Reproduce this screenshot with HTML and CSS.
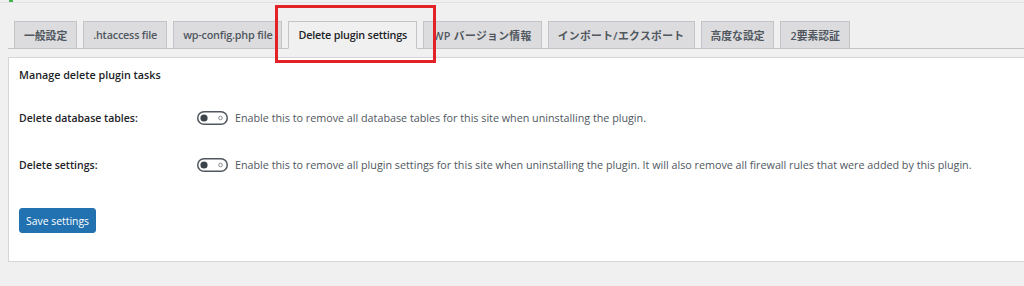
FILE: index.html
```html
<!doctype html>
<html>
  <head>
    <meta charset="UTF-8">
    <title>Delete plugin settings</title>
    <link rel="stylesheet" href="styles.css">
  </head>
  <body>
    <div class="topbar"><span class="mark"></span></div>

    <div class="wrap">
      <div class="tabs">
        <a class="tab" href="#">一般設定</a>
        <a class="tab en" href="#">.htaccess file</a>
        <a class="tab en" href="#">wp-config.php file</a>
        <a class="tab en active" href="#">Delete plugin settings</a>
        <a class="tab kana" href="#">WP バージョン情報</a>
        <a class="tab kana" href="#">インポート/エクスポート</a>
        <a class="tab" href="#">高度な設定</a>
        <a class="tab" href="#">2要素認証</a>
      </div>

      <div class="panel">
        <h3 class="panel-title">Manage delete plugin tasks</h3>

        <div class="row">
          <div class="label">Delete database tables:</div>
          <svg class="toggle" width="31" height="14" viewBox="0 0 31 14">
            <rect x="0.75" y="0.75" width="29.5" height="12.5" rx="6.25" fill="#fff" stroke="#50575e" stroke-width="1.5"/>
            <circle cx="7" cy="7" r="3.6" fill="#3c434a"/>
            <circle cx="23.5" cy="7" r="1.8" fill="none" stroke="#8c8f94" stroke-width="1"/>
          </svg>
          <div class="desc">Enable this to remove all database tables for this site when uninstalling the plugin.</div>
        </div>

        <div class="row">
          <div class="label">Delete settings:</div>
          <svg class="toggle" width="31" height="14" viewBox="0 0 31 14">
            <rect x="0.75" y="0.75" width="29.5" height="12.5" rx="6.25" fill="#fff" stroke="#50575e" stroke-width="1.5"/>
            <circle cx="7" cy="7" r="3.6" fill="#3c434a"/>
            <circle cx="23.5" cy="7" r="1.8" fill="none" stroke="#8c8f94" stroke-width="1"/>
          </svg>
          <div class="desc">Enable this to remove all plugin settings for this site when uninstalling the plugin. It will also remove all firewall rules that were added by this plugin.</div>
        </div>

        <button class="btn">Save settings</button>
      </div>
    </div>

    <!-- annotation box round the active tab -->
    <div class="highlight"></div>
  </body>
</html>
```

FILE: styles.css
```css
*{
  margin:0;
  padding:0;
  box-sizing:border-box;
}
body{
  background-color:#f0f0f1;
  font-family:"Open Sans","Noto Sans CJK JP",sans-serif;
  color:#1d2327;
  overflow:hidden;
}

.topbar{
  height:3px;
  border-bottom:1px solid #e2e2e4;
}
.mark{
  display:block;
  width:4px;
  height:2px;
  margin-left:9px;
  background-color:#3fb34f;
}

.wrap{
  padding-left:8px;
}

.tabs{
  display:flex;
  gap:6px;
  padding:18px 0 0 6px;
  border-bottom:1px solid #c3c4c7;
}
.tab{
  display:flex;
  align-items:center;
  height:28px;
  margin-bottom:-1px;
  padding:0 9px 1px;
  border:1px solid #c3c4c7;
  background-color:#dcdcde;
  color:#50575e;
  font-size:10.8px;
  font-weight:600;
  text-decoration:none;
  white-space:nowrap;
}
.tab.en{
  letter-spacing:-0.2px;
}
.tab.kana{
  letter-spacing:0.35px;
}
.tab.active{
  background-color:#f0f0f1;
  border-bottom-color:#f0f0f1;
  color:#1d2327;
}

.panel{
  margin:8px -2px 0 0;
  padding:10px 0 28px 10px;
  background-color:#fff;
  border:1px solid #d5d6d8;
}
.panel-title{
  font-size:10.75px;
  font-weight:600;
  line-height:14px;
  margin-bottom:12px;
}

.row{
  display:flex;
  align-items:center;
  height:47px;
}
.label{
  width:178px;
  font-size:10.5px;
  font-weight:600;
}
.toggle{
  display:block;
  margin-right:7px;
}
.desc{
  font-size:10.75px;
  color:#50575e;
  white-space:nowrap;
}

.btn{
  display:block;
  margin-top:20px;
  width:77px;
  height:25px;
  border:1px solid #2271b1;
  border-radius:3px;
  background-color:#2271b1;
  color:#fff;
  font-family:inherit;
  font-size:10.4px;
}

.highlight{
  position:absolute;
  left:275px;
  top:5px;
  width:161px;
  height:58px;
  border:3px solid #e32227;
}
```
